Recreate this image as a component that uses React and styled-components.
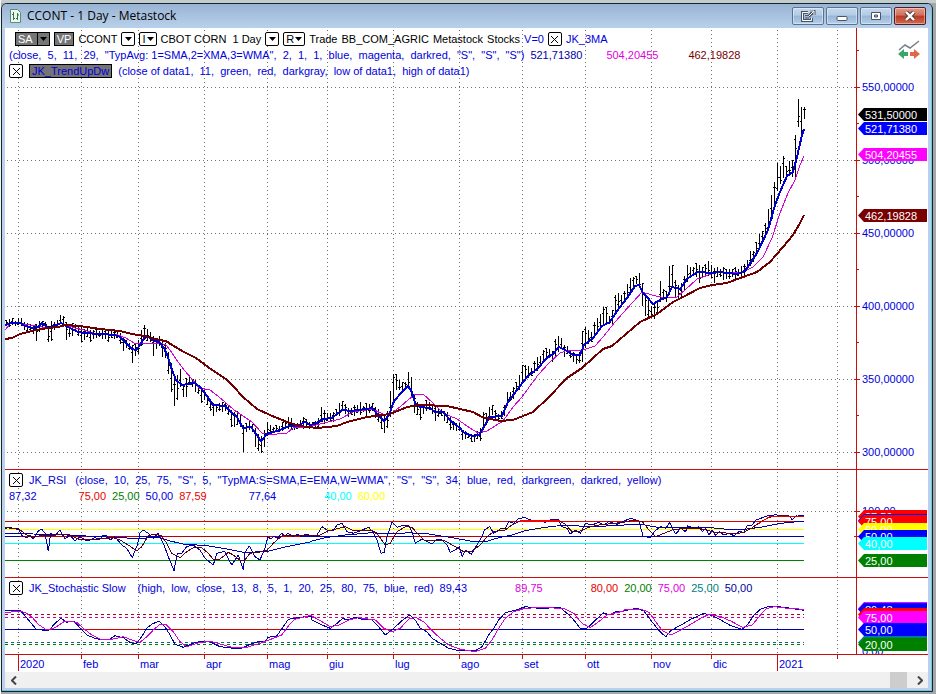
import React from 'react';
// styling
import styled, { createGlobalStyle } from 'styled-components';

const RED = '#c80f0f';
const BLUE = '#0000dc';
const NAVY = '#0000a8';
const MAGENTA = '#ff00ff';
const DARKRED = '#780000';

// x of the first session of every month
const months = [
    { x: 18, name: '2020', long: true },
    { x: 81, name: 'feb' },
    { x: 138, name: 'mar' },
    { x: 204, name: 'apr' },
    { x: 267, name: 'mag' },
    { x: 327, name: 'giu' },
    { x: 393, name: 'lug' },
    { x: 459, name: 'ago' },
    { x: 522, name: 'set' },
    { x: 585, name: 'ott' },
    { x: 651, name: 'nov' },
    { x: 711, name: 'dic' },
    { x: 777, name: '2021', long: true },
    { x: 837, name: '' },
];

// high / low of every session, one each 3 units from x = 6
const sessions = `
320,326 319,327 318,325 321,326 318,325 318,326 322,330 323,331 324,332 325,334 324,341 321,332 321,329 322,328 326,342
321,341 322,330 320,328 315,324 316,326 322,340 324,337 323,336 324,331 326,336 327,342 329,340 328,337 330,342 330,339
329,338 331,337 329,339 330,339 330,342 329,338 330,339 331,338 333,344 338,351 340,348 343,350 345,363 343,356 340,354
330,346 325,340 329,341 332,342 336,356 338,349 336,346 340,357 343,358 352,374 363,392 378,406 375,400 369,387 385,397
378,397 375,385 379,387 380,392 385,394 387,403 390,400 395,405 400,411 403,416 404,412 403,411 402,412 403,411 405,415
410,427 412,427 411,425 414,427 425,452 423,432 420,430 424,432 428,447 434,451 436,453 430,447 422,436 425,433 427,432
425,432 426,432 422,431 420,429 417,429 418,430 423,430 423,429 420,428 417,429 419,428 422,429 422,428 421,427 418,428
407,422 410,424 413,421 413,422 412,422 409,416 403,416 401,410 404,414 408,417 408,415 405,416 405,413 402,415 406,412
403,418 404,413 403,411 407,418 409,422 414,429 416,433 411,428 391,417 374,402 374,390 380,390 382,392 382,390 372,388
377,398 394,413 402,415 405,420 404,414 400,411 402,410 405,414 407,421 408,417 409,416 411,421 412,423 416,430 421,430
423,431 423,431 430,440 431,439 433,438 434,442 434,442 431,439 428,441 412,430 413,425 407,420 405,415 410,420 414,421
411,419 405,416 392,405 392,401 387,399 382,392 375,390 365,382 365,378 366,378 368,376 361,373 357,371 356,366 350,363
348,359 349,358 351,362 339,356 336,352 338,349 345,357 346,354 350,358 352,362 355,364 352,363 331,362 327,348 330,344
332,342 322,337 318,333 314,328 307,326 307,323 316,324 310,325 295,313 293,307 295,305 291,302 284,299 278,293 277,286
276,284 273,288 283,306 293,316 300,317 306,315 304,319 300,313 281,302 289,300 291,302 266,295 265,288 280,297 285,299
283,297 276,290 265,282 267,277 267,276 263,277 265,283 267,277 264,277 261,276 265,278 268,283 267,277 269,277 267,280
269,279 269,279 269,277 267,279 269,276 266,278 264,275 260,270 251,266 251,262 242,256 234,247 231,243 223,238 209,231
195,220 182,207 163,191 166,184 156,178 166,178 161,174 160,177 135,177 99,127 107,135 107,119`;

const bars = sessions.trim().split(/\s+/).map((s, i) => {
    const [hi, lo] = s.split(',').map(Number);
    return { x: 6 + i * 3, hi, lo };
});

const fastAvg = '5,325 12,323 20,323 25,326 33,328 38,327 42,323 48,328 54,326 61,323 66,326 72,329 78,332 84,333 100,334 115,335 120,337 126,343 132,349 136,350 140,345 144,338 148,337 153,340 159,342 164,348 168,357 172,370 176,380 182,385 188,384 195,383 201,388 207,396 213,405 225,406 231,412 237,417 243,428 251,427 261,441 267,434 280,430 289,426 297,426 305,422 310,425 317,423 323,419 332,418 342,410 352,411 372,408 378,415 384,421 389,415 394,401 402,392 408,386 412,392 415,403 420,407 430,408 435,412 443,412 452,422 460,428 463,432 472,436 479,435 485,425 490,417 502,416 508,402 517,390 527,377 537,369 547,358 553,354 559,347 567,351 573,355 580,355 584,345 593,338 602,326 610,322 617,311 627,298 635,286 639,285 643,293 647,297 653,304 662,299 667,297 672,287 680,289 688,278 698,272 712,273 720,272 737,274 745,271 757,253 768,230 775,205 780,192 787,176 793,172 797,157 802,135 804,129';
const midAvg = '5,330 10,324 18,323 30,325 42,327 54,327 66,325 75,328 84,330 93,333 105,334 118,335 126,338 134,343 145,343 160,343 166,345 170,350 176,359 184,370 192,379 199,388 210,390 218,396 226,403 234,410 252,422 262,433 268,435 287,433 293,428 307,427 320,424 340,419 353,412 372,409 383,414 390,414 400,407 408,400 415,394 423,394 433,403 443,413 457,419 470,428 478,433 487,431 503,421 513,407 522,397 538,375 550,362 560,353 568,350 583,350 595,346 603,337 615,322 623,313 633,302 642,292 652,295 665,298 677,297 685,290 697,279 717,272 743,272 753,267 763,257 772,238 780,213 788,193 795,180 800,165 804,156';
const slowAvg = '5,339 12,338 20,334 28,332 36,330 48,328 58,327 66,325 80,326 100,329 120,331 132,334 145,336 155,339 166,341 172,345 184,352 196,358 208,367 218,374 226,379 234,387 243,397 257,409 270,415 287,422 300,426 317,428 337,426 347,422 367,417 390,414 407,407 420,405 447,406 473,412 482,417 500,421 513,420 533,412 548,398 567,378 582,368 603,349 612,346 640,322 657,314 673,302 683,297 700,288 712,285 727,283 743,277 757,272 770,262 783,247 793,235 800,223 804,215';

// oscillators are sampled on a grid three times finer, in blocks of 312 units
const join = (...blocks) =>
    blocks
        .map((block, i) =>
            block
                .split(' ')
                .map((p) => {
                    const [x, y] = p.split(',').map(Number);
                    return `${(i * 312 + x / 3).toFixed(1)},${(465 + y / 3).toFixed(1)}`;
                })
                .join(' ')
        )
        .join(' ');

const rsi = join(
    '15,190 30,187 42,192 55,189 65,212 80,218 90,212 100,222 115,198 125,192 135,205 145,258 152,205 165,212 180,195 195,222 210,210 225,228 240,215 255,225 270,225 285,218 300,222 310,210 320,212 330,225 345,215 365,240 380,250 397,278 412,240 420,205 430,195 445,205 460,220 475,205 490,235 505,275 522,317 532,265 545,265 560,245 580,240 600,255 615,280 640,300 650,265 660,262 675,260 695,300 715,270 730,315 735,262 748,243 765,275 780,285 795,250 803,215 812,222 822,213 832,220 845,205 855,212 865,205 880,215 890,208 905,212 920,208 935,214',
    '0,215 15,210 30,185 45,195 65,195 75,180 90,175 105,200 125,205 150,195 170,187 185,205 195,225 207,265 217,262 225,215 240,172 255,187 270,182 290,182 300,200 310,235 330,222 345,230 360,237 375,222 390,225 405,240 415,262 430,255 442,245 451,275 460,255 478,268 495,240 510,215 517,195 533,185 545,205 565,192 580,190 590,170 605,175 620,160 640,158 660,167 680,165 700,172 720,163 740,165 750,185 765,190 775,207 790,195 805,205 820,175 840,180 860,172 875,180 890,170 915,178 935,168',
    '0,168 20,160 45,168 57,213 80,218 90,200 110,185 125,190 137,173 155,207 170,190 185,200 190,182 210,190 225,185 235,200 245,190 255,210 265,195 275,212 285,200 300,210 315,205 330,212 345,200 360,202 370,182 385,180 395,165 410,160 430,153 455,149 475,153 495,152 505,165 520,150 540,151'
);
const rsiAvg = join(
    '15,188 40,190 60,195 80,210 100,217 130,210 150,213 180,208 210,210 235,222 260,225 300,222 340,218 360,225 385,240 410,258 425,245 445,212 465,207 485,213 500,235 515,265 540,278 560,260 580,248 605,248 625,265 640,283 660,282 685,262 700,270 720,285 735,285 750,265 775,262 800,257 820,235 845,213 880,212 935,213',
    '20,212 50,197 80,190 100,185 120,195 160,195 180,195 200,212 220,240 235,235 255,200 280,185 300,187 320,210 335,225 360,225 400,228 430,245 455,260 480,258 505,240 525,215 545,200 580,195 600,180 625,167 660,168 740,167 760,178 780,200 800,200 830,187 860,180 935,172',
    '30,165 55,170 75,195 95,215 120,205 145,195 180,190 220,190 250,195 270,202 300,203 330,207 360,202 385,188 410,170 435,157 470,152 510,154 540,153'
);
const rsiLong = join(
    '15,205 100,207 200,210 300,215 400,220 480,218 510,228 550,237 620,242 680,252 730,262 800,260 850,247 900,237 935,230',
    '0,228 40,218 100,210 180,203 240,207 290,203 350,207 420,218 480,229 520,230 560,218 600,210 640,197 700,187 760,180 830,185 935,181',
    '0,180 50,178 100,187 250,187 300,192 370,192 420,185 470,175 540,168'
);
const stochK = join(
    '15,437 60,437 75,452 90,470 108,492 130,496 145,498 165,475 183,460 200,472 220,468 235,483 260,510 285,520 310,525 330,522 345,512 370,518 390,532 407,537 425,515 440,490 455,478 477,468 495,485 510,510 525,538 550,547 580,535 605,528 630,530 660,545 700,550 725,550 750,538 775,530 795,528 805,517 830,513 850,485 865,463 900,457 935,453',
    '0,465 30,480 55,490 75,475 92,460 105,465 130,457 150,463 180,465 200,485 220,510 245,490 270,467 293,450 310,465 325,490 345,500 360,520 385,535 410,550 440,557 490,557 510,545 530,510 545,490 560,465 580,443 605,437 640,425 680,430 745,428 765,445 785,465 805,490 825,490 845,470 875,443 890,450 910,440 935,440',
    '0,437 40,430 60,438 80,465 105,497 125,515 140,497 180,475 200,463 240,445 265,452 290,465 320,482 355,493 370,480 390,450 410,432 440,423 480,427 540,436'
);
const stochD = join(
    '15,444 50,438 75,442 95,455 115,478 140,495 165,488 195,468 230,472 250,490 275,510 300,522 340,522 370,515 395,525 420,532 440,515 460,495 480,478 500,480 520,500 540,530 560,545 590,535 630,528 660,537 700,548 740,547 780,535 820,520 845,510 865,483 885,463 935,450',
    '0,453 30,470 55,485 80,480 110,465 140,458 190,465 215,490 240,500 265,490 290,462 310,457 335,470 360,497 385,520 410,540 445,553 490,560 520,550 540,525 560,490 580,460 605,440 640,430 700,427 760,432 785,445 810,475 835,488 860,470 885,450 935,438',
    '0,435 50,432 75,442 95,470 115,497 140,510 170,495 200,478 230,460 255,448 290,455 320,468 355,487 385,480 405,455 425,432 450,425 490,430 540,433'
);

const priceScale = {
    top: 28,
    height: 441,
    labels: [
        { y: 87, text: '550,00000' },
        { y: 160, text: '500,00000' },
        { y: 233, text: '450,00000' },
        { y: 306, text: '400,00000' },
        { y: 379, text: '350,00000' },
        { y: 452, text: '300,00000' },
    ],
    ticks: [87, 160, 233, 306, 379, 452],
    minor: [50, 123, 196, 269, 342, 415],
    tags: [
        { y: 114, text: '531,50000', color: '#000' },
        { y: 128, text: '521,71380', color: '#00f' },
        { y: 154, text: '504,20455', color: MAGENTA },
        { y: 215, text: '462,19828', color: DARKRED },
    ],
};
const rsiScale = {
    top: 470,
    height: 107,
    labels: [{ y: 511, text: '100,00' }],
    ticks: [511, 536],
    minor: [],
    tags: [
        { y: 516, text: '87,59', color: '#f00' },
        { y: 520, text: '77,64', color: '#00f' },
        { y: 521, text: '75,00', color: '#f00' },
        { y: 529, text: '60,00', color: '#ff0' },
        { y: 536, text: '50,00', color: '#00f' },
        { y: 543, text: '40,00', color: '#0ff' },
        { y: 560, text: '25,00', color: '#008000' },
    ],
};
const stochScale = {
    top: 578,
    height: 76,
    labels: [{ y: 651, text: '0,00' }],
    ticks: [],
    minor: [],
    tags: [
        { y: 608, text: '89,75', color: MAGENTA },
        { y: 609, text: '89,43', color: '#00f' },
        { y: 614, text: '80,00', color: '#f00' },
        { y: 617, text: '75,00', color: MAGENTA },
        { y: 629, text: '50,00', color: '#00f' },
        { y: 642, text: '25,00', color: '#008080' },
        { y: 644, text: '20,00', color: '#008000' },
    ],
};

// dotted month lines, shared by the three panels
function Grid({ scale, rows = [] }) {
    return (
        <g stroke='#707070' strokeDasharray='1 3' shapeRendering='crispEdges'>
            {months.map((m) => (
                <line key={m.x} x1={m.x + 0.5} x2={m.x + 0.5} y1={scale.top + 2} y2={scale.top + scale.height} />
            ))}
            {rows.map((y) => (
                <line key={y} x1='7' x2='856' y1={y + 0.5} y2={y + 0.5} />
            ))}
        </g>
    );
}

function Level({ y, color, from = 5, to = 804, dash }) {
    return (
        <line x1={from} x2={to} y1={y + 0.5} y2={y + 0.5} stroke={color} strokeDasharray={dash} shapeRendering='crispEdges' />
    );
}

function Curve({ points, color, width = 1 }) {
    return (
        <polyline points={points} fill='none' stroke={color} strokeWidth={width} strokeLinejoin='round' shapeRendering='crispEdges' />
    );
}

function Plot({ scale, label, children }) {
    return (
        <Canvas viewBox={`5 ${scale.top} 851 ${scale.height}`} preserveAspectRatio='none' role='img' aria-label={label}>
            {children}
        </Canvas>
    );
}

function Scale({ scale }) {
    const at = (y) => ({ top: `${((y - scale.top) / scale.height) * 100}%` });

    return (
        <ScaleColumn>
            {scale.ticks.map((y) => <Tick key={y} style={at(y)} />)}
            {scale.minor.map((y) => <Tick key={y} $minor style={at(y)} />)}
            {scale.labels.map((l) => <ScaleLabel key={l.y} style={at(l.y)}>{l.text}</ScaleLabel>)}
            {scale.tags.map((t) => (
                <Tag key={t.text} $color={t.color} style={at(t.y)}>{t.text}</Tag>
            ))}
        </ScaleColumn>
    );
}

function Arrow() {
    return <svg width='7' height='4' viewBox='0 0 7 4' aria-hidden='true'><path d='M0 0h7L3.5 4z' fill='currentColor' /></svg>;
}

function CloseBox({ name }) {
    return (
        <BoxButton aria-label={`Remove ${name}`}>
            <svg width='7' height='7' viewBox='0 0 7 7' aria-hidden='true'>
                <path d='M0 0l7 7M7 0L0 7' stroke='#000' />
            </svg>
        </BoxButton>
    );
}

function App() {
    return (
        <>
            <GlobalStyle />
            <Frame>
                <TitleBar>
                    <svg width='13' height='14' viewBox='0 0 13 14' aria-hidden='true'>
                        <path d='M1.5.5h7l3 3v10h-10z' fill='#eef6ee' stroke='#5a8f72' />
                        <path d='M4.5 3v8M3 5.500h1M5 9.500h1M8.500 4v7M7 9.500h1M9 6h1' stroke='#2c7a4b' />
                    </svg>
                    <Title>CCONT - 1 Day - Metastock</Title>
                    <WindowButton aria-label='Detach'>
                        <svg width='16' height='13' viewBox='0 0 16 13' aria-hidden='true'>
                            <path d='M8 2.500H2.500v8h9V8' fill='none' stroke='#4a5566' strokeWidth='3' />
                            <path d='M5 5.500h3.500M5 8h4' fill='none' stroke='#4a5566' />
                            <path d='M8 2.500H2.500v8h9V8' fill='none' stroke='#fff' />
                            <path d='M8.500 6.500L13.500 1.500M10 1h4v4' fill='none' stroke='#4a5566' strokeWidth='3' />
                            <path d='M8.500 6.500L13.500 1.500M10 1h4v4' fill='none' stroke='#fff' />
                        </svg>
                    </WindowButton>
                    <WindowButton aria-label='Minimize'>
                        <svg width='12' height='12' viewBox='0 0 12 12' aria-hidden='true'>
                            <rect x='1' y='6.500' width='10' height='4' rx='1' fill='#fff' stroke='#4a5566' />
                        </svg>
                    </WindowButton>
                    <WindowButton aria-label='Maximize'>
                        <svg width='12' height='12' viewBox='0 0 12 12' aria-hidden='true'>
                            <path fillRule='evenodd' d='M1.500 2.500h9v7h-9zM4.500 5v2h3V5z' fill='#fff' stroke='#4a5566' />
                        </svg>
                    </WindowButton>
                    <WindowButton $close aria-label='Close'>
                        <svg width='12' height='10' viewBox='0 0 12 10' aria-hidden='true'>
                            <path d='M2 1l8 8M10 1L2 9' stroke='#5a4444' strokeWidth='4.500' />
                            <path d='M2 1l8 8M10 1L2 9' stroke='#fff' strokeWidth='2.400' />
                        </svg>
                    </WindowButton>
                </TitleBar>

                <Panel $grow={441}>
                    <PlotArea>
                        <Plot scale={priceScale} label='CCONT daily price'>
                            <Grid scale={priceScale} rows={priceScale.ticks} />
                            <g fill='#000' shapeRendering='crispEdges'>
                                {bars.map((b, i) => {
                                    const span = b.lo - b.hi;
                                    const open = Math.round(b.hi + (span * ((i * 7) % 10)) / 10);
                                    const close = Math.round(b.hi + (span * ((i * 3 + 4) % 10)) / 10);
                                    return (
                                        <React.Fragment key={b.x}>
                                            <rect x={b.x} y={b.hi} width='1' height={span} />
                                            <rect x={b.x - 1} y={open} width='1' height='1' />
                                            <rect x={b.x + 1} y={close} width='1' height='1' />
                                        </React.Fragment>
                                    );
                                })}
                            </g>
                            <Curve points={midAvg} color='#d800d8' />
                            <Curve points={fastAvg} color='#0000d0' width={2} />
                            <Curve points={slowAvg} color='#700000' width={2} />
                        </Plot>
                        <Heading $top={3}>
                            <Line $toolbar>
                                <Chip>SA<ChipArrow><Arrow /></ChipArrow></Chip>
                                <Chip>VP</Chip>
                                <Text $color='#000'>CCONT</Text>
                                <BoxButton aria-label='Choose symbol'><Arrow /></BoxButton>
                                <BoxButton>I<Arrow /></BoxButton>
                                <Text $color='#000'>CBOT CORN  1 Day</Text>
                                <BoxButton aria-label='Choose period'><Arrow /></BoxButton>
                                <BoxButton>R<Arrow /></BoxButton>
                                <Text $color='#000'>Trade</Text>
                                <Text $color='#000'>BB_COM_AGRIC</Text>
                                <Text $color='#000'>Metastock</Text>
                                <Text $color='#000'>Stocks</Text>
                                <Text>V=0</Text>
                                <CloseBox name='JK_3MA' />
                                <Text>JK_3MA</Text>
                            </Line>
                            <Line>
                                <Text>{'(close,  5,  11,  29,  "TypAvg: 1=SMA,2=XMA,3=WMA",  2,  1,  1,  blue,  magenta,  darkred,  "S",  "S",  "S")'}</Text>
                                <Text $color={NAVY}>521,71380</Text>
                                <Text $color='#e000e0' $lead={18}>504,20455</Text>
                                <Text $color={DARKRED} $lead={24}>462,19828</Text>
                            </Line>
                            <Line>
                                <CloseBox name='JK_TrendUpDw' />
                                <Selected>JK_TrendUpDw</Selected>
                                <Text>(close of data1,  11,  green,  red,  darkgray,  low of data1,  high of data1)</Text>
                            </Line>
                        </Heading>
                    </PlotArea>
                    <Scale scale={priceScale} />
                    <TrendBadge width='22' height='20' viewBox='0 0 22 20' aria-hidden='true'>
                        <path d='M1 10l6-5 5 3 9-7' fill='none' stroke='#75818c' strokeWidth='1.500' />
                        <path d='M0 14l6-5v3h4v4H6v3z' fill='#3aa56b' />
                        <path d='M22 14l-6-5v3h-4v4h4v3z' fill='#e0694a' />
                    </TrendBadge>
                </Panel>

                <Panel $grow={107}>
                    <PlotArea>
                        <Plot scale={rsiScale} label='JK_RSI'>
                            <Grid scale={rsiScale} rows={[511]} />
                            <Level y={521} color='#e00000' />
                            <Level y={529} color='#ff0' />
                            <Level y={543} color='#0ff' />
                            <Level y={560} color='#008000' />
                            <Level y={536} color={NAVY} />
                            <Level y={536} color='#c00000' from={20} to={138} />
                            <Level y={536} color='#c00000' from={160} to={300} />
                            <Level y={536} color='#c00000' from={378} to={394} />
                            <Level y={536} color='#c00000' from={412} to={486} />
                            <Curve points={rsiLong} color={NAVY} />
                            <Curve points={rsi} color={NAVY} />
                            <Curve points={rsiAvg} color='#600018' />
                            <Curve points='520,521 532,521 560,521' color='#f00' width={2} />
                            <Curve points='758,524 769,517 781,516 794,516 804,516' color='#e00000' />
                        </Plot>
                        <Heading>
                            <Line>
                                <CloseBox name='JK_RSI' />
                                <Text>JK_RSI</Text>
                                <Text $lead={3}>{'(close,  10,  25,  75,  "S",  5,  "TypMA:S=SMA,E=EMA,W=WMA",  "S",  "S",  34,  blue,  red,  darkgreen,  darkred,  yellow)'}</Text>
                            </Line>
                            <Line>
                                <Text>87,32</Text>
                                <Text $color='#e80000' $lead={36}>75,00</Text>
                                <Text $color='#008000'>25,00</Text>
                                <Text>50,00</Text>
                                <Text $color='#e80000'>87,59</Text>
                                <Text $lead={36}>77,64</Text>
                                <Text $color='#0ff' $lead={42}>40,00</Text>
                                <Text $color='#ff0'>60,00</Text>
                            </Line>
                        </Heading>
                    </PlotArea>
                    <Scale scale={rsiScale} />
                </Panel>

                <Panel $grow={76}>
                    <PlotArea>
                        <Plot scale={stochScale} label='JK_Stochastic Slow'>
                            <Grid scale={stochScale} />
                            <Level y={614} color='#a80020' dash='3 3' />
                            <Level y={617} color='#c800a0' dash='3 3' />
                            <Level y={642} color='#007070' dash='3 3' />
                            <Level y={644} color='#007000' dash='3 3' />
                            <Level y={629} color={NAVY} />
                            <Level y={629} color='#d80000' from={48} to={52} />
                            <Level y={629} color='#d80000' from={82} to={144} />
                            <Level y={629} color='#d80000' from={168} to={282} />
                            <Level y={629} color='#d80000' from={381} to={392} />
                            <Level y={629} color='#d80000' from={420} to={492} />
                            <Level y={629} color='#d80000' from={658} to={672} />
                            <Curve points={stochK} color={NAVY} />
                            <Curve points={stochD} color='#d800d8' />
                        </Plot>
                        <Heading>
                            <Line>
                                <CloseBox name='JK_Stochastic Slow' />
                                <Text>JK_Stochastic Slow</Text>
                                <Text $lead={6}>(high,  low,  close,  13,  8,  5,  1,  20,  25,  80,  75,  blue,  red)</Text>
                                <Text>89,43</Text>
                                <Text $color='#e000e0' $lead={42}>89,75</Text>
                                <Text $color='#e80000' $lead={42}>80,00</Text>
                                <Text $color='#008000'>20,00</Text>
                                <Text $color='#e000e0'>75,00</Text>
                                <Text $color='#008080'>25,00</Text>
                                <Text $color={NAVY}>50,00</Text>
                            </Line>
                        </Heading>
                    </PlotArea>
                    <Scale scale={stochScale} />
                </Panel>

                <MonthRow>
                    <Months>
                        <span />
                        {months.map((m) => <Month key={m.x} $long={m.long}>{m.name}</Month>)}
                    </Months>
                </MonthRow>

                <ScrollBar>
                    <ScrollButton aria-label='Scroll left'>
                        <svg width='6' height='9' viewBox='0 0 6 9' aria-hidden='true'>
                            <path d='M5 .5l-4 4 4 4' fill='none' stroke='#444' strokeWidth='2' />
                        </svg>
                    </ScrollButton>
                    <Thumb />
                    <ScrollButton aria-label='Scroll right'>
                        <svg width='6' height='9' viewBox='0 0 6 9' aria-hidden='true'>
                            <path d='M1 .5l4 4-4 4' fill='none' stroke='#444' strokeWidth='2' />
                        </svg>
                    </ScrollButton>
                </ScrollBar>
            </Frame>
        </>
    );
}

const GlobalStyle = createGlobalStyle`
    * {
        box-sizing: border-box;
    }
    body {
        margin: 0;
        background:
            linear-gradient(to right, #f4f4f4 1px, transparent 1px),
            linear-gradient(#c4cdcd 3px, #a5a8aa 3px);
        font-family: "Liberation Sans", Arial, sans-serif;
        font-size: 11px;
        line-height: 16px;
    }
    button {
        font: inherit;
        padding: 0;
        cursor: pointer;
    }
    #root {
        display: flex;
        min-height: 100vh;
        padding: 3px 3px 2px 1px;
    }
`;
const Frame = styled.main`
    flex: 1;
    min-width: 0;
    display: flex;
    flex-direction: column;
    padding: 0 4px 3px 3px;
    border: 1px solid #14252c;
    border-radius: 6px 6px 0 0;
    box-shadow: inset -1px -1px 0 #6fc4e0;
    background: #b9d1ea;
    overflow: hidden;
`;
const TitleBar = styled.header`
    display: flex;
    align-items: center;
    gap: 2px;
    height: 24px;
    margin: 0 -3px;
    padding: 0 5px 0 7px;
    background: linear-gradient(#98b3d3, #b9d1ea);
`;
const Title = styled.h1`
    flex: 1;
    margin: 0;
    padding-left: 3px;
    font: 12px/16px "Open Sans", "Noto Sans", sans-serif;
    color: #000;
`;
const WindowButton = styled.button`
    display: flex;
    align-items: center;
    justify-content: center;
    width: 32px;
    height: 18px;
    border: 1px solid ${({ $close }) => ($close ? '#5b1a1a' : '#5c7390')};
    border-radius: 2px;
    box-shadow: inset 0 0 0 1px rgba(255, 255, 255, 0.4);
    background: ${({ $close }) =>
        $close
            ? 'linear-gradient(#e0988a 0%, #d2705c 45%, #b83a22 50%, #cf6a50 100%)'
            : 'linear-gradient(#c6d9ee 0%, #b2cbe6 45%, #98b5d6 50%, #b4cfea 100%)'};
`;
const Panel = styled.section`
    position: relative;
    display: grid;
    grid-template-columns: minmax(0, 1fr) 72px;
    flex: ${({ $grow }) => $grow} 1 0;
    min-height: 0;
    border-bottom: 1px solid ${RED};
    background: #fff;
    overflow: hidden;
`;
const PlotArea = styled.div`
    position: relative;
    min-width: 0;
`;
const Canvas = styled.svg`
    position: absolute;
    inset: 0;
    width: 100%;
    height: 100%;
`;
const Heading = styled.div`
    position: relative;
    padding: ${({ $top = 2 }) => $top}px 0 0 4px;
`;
const Line = styled.div`
    display: flex;
    align-items: center;
    gap: ${({ $toolbar }) => ($toolbar ? '4px' : '6px')};
    height: 16px;
    padding-left: ${({ $toolbar }) => ($toolbar ? '6px' : '0')};
`;
const Text = styled.span`
    flex: none;
    margin-left: ${({ $lead = 0 }) => $lead}px;
    color: ${({ $color = BLUE }) => $color};
    white-space: pre;
`;
const BoxButton = styled.button`
    display: flex;
    align-items: center;
    justify-content: center;
    gap: 1px;
    flex: none;
    min-width: 14px;
    height: 14px;
    padding: 0 2px;
    border: 1px solid #000;
    border-radius: 2px;
    background: #fff;
    color: #000;
    line-height: 12px;
`;
const Chip = styled.button`
    display: flex;
    align-items: center;
    flex: none;
    height: 14px;
    padding: 0 2px;
    border: 1px solid #000;
    background: #757575;
    color: #fff;
    line-height: 12px;
`;
const ChipArrow = styled.span`
    display: flex;
    align-items: center;
    height: 12px;
    margin-left: 4px;
    padding-left: 2px;
    border-left: 1px solid #000;
    color: #000;
`;
const Selected = styled.button`
    flex: none;
    height: 14px;
    padding: 0 2px;
    border: 1px solid #000;
    background: #757575;
    color: ${BLUE};
    line-height: 12px;
`;
const TrendBadge = styled.svg`
    position: absolute;
    top: 12px;
    right: 8px;
`;
const ScaleColumn = styled.div`
    position: relative;
    border-left: 1px solid ${RED};
`;
const Tick = styled.i`
    position: absolute;
    left: ${({ $minor }) => ($minor ? '0' : '-3px')};
    width: ${({ $minor }) => ($minor ? '2px' : '6px')};
    height: 1px;
    background: ${RED};
`;
const ScaleLabel = styled.span`
    position: absolute;
    left: 5px;
    margin-top: -8px;
    color: ${BLUE};
`;
const Tag = styled.span`
    position: absolute;
    left: 1px;
    right: 1px;
    height: 13px;
    margin-top: -6px;
    padding-left: 7px;
    background: ${({ $color }) => $color};
    clip-path: polygon(0 50%, 6px 0, 100% 0, 100% 100%, 6px 100%);
    color: #fff;
    line-height: 14px;
`;
const MonthRow = styled.div`
    display: grid;
    grid-template-columns: minmax(0, 1fr) 72px;
    height: 17px;
    background: #fff;
`;
const Months = styled.div`
    display: grid;
    grid-template-columns: 13fr 63fr 57fr 66fr 63fr 60fr 66fr 66fr 63fr 63fr 66fr 60fr 66fr 60fr 19fr;
`;
const Month = styled.span`
    padding: 1px 0 0 2px;
    background: linear-gradient(${RED}, ${RED}) no-repeat;
    background-size: 1px ${({ $long }) => ($long ? '16px' : '4px')};
    color: ${BLUE};
`;
const ScrollBar = styled.div`
    display: flex;
    justify-content: flex-end;
    height: 16px;
    background: #f0f0f0;
`;
const ScrollButton = styled.button`
    display: flex;
    align-items: center;
    justify-content: center;
    width: 17px;
    border: 0;
    background: #f0f0f0;

    &:first-child {
        margin-right: auto;
    }
`;
const Thumb = styled.div`
    width: 17px;
    margin-right: 4px;
    background: #cdcdcd;
`;

export default App;
